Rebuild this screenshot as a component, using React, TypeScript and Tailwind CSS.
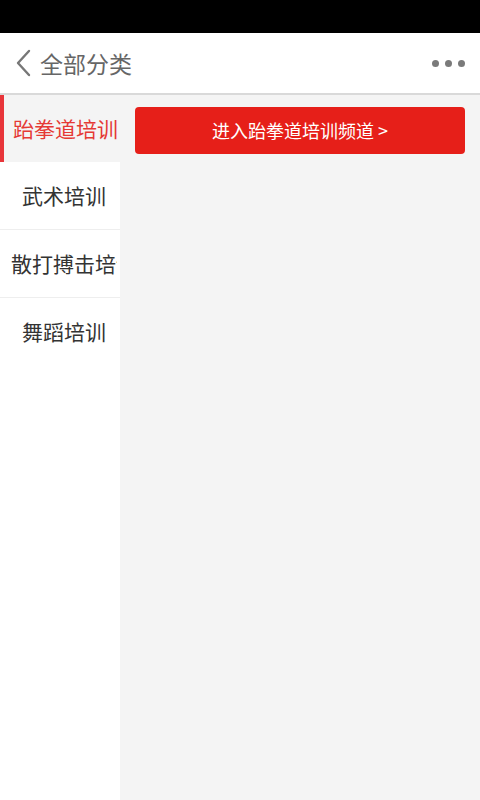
import { useState } from "react";

const categories = ["跆拳道培训", "武术培训", "散打搏击培训", "舞蹈培训"];

export default function App() {
  const [active, setActive] = useState(0);

  return (
    <div
      className="w-[480px] h-[800px] flex flex-col overflow-hidden bg-[#f4f4f4]"
      style={{ fontFamily: '"Noto Sans CJK SC", "Liberation Sans", sans-serif' }}
    >
      <div className="h-[33px] bg-black shrink-0" />

      <div className="h-[62px] bg-white flex items-center justify-between pl-[14px] pr-[14px] border-b-2 border-[#d9d9d9] shrink-0">
        <div className="flex items-center gap-[6px]">
          <svg width="20" height="28" viewBox="0 0 20 28" fill="none">
            <path d="M15 2 L4 14 L15 26" stroke="#777" strokeWidth="2.4" strokeLinecap="round" strokeLinejoin="round" />
          </svg>
          <span className="text-[23px] text-[#666] leading-none">全部分类</span>
        </div>
        <div className="flex items-center gap-[6px] pr-[1px]">
          <span className="w-[7px] h-[7px] rounded-full bg-[#7a7a7a]" />
          <span className="w-[7px] h-[7px] rounded-full bg-[#7a7a7a]" />
          <span className="w-[7px] h-[7px] rounded-full bg-[#7a7a7a]" />
        </div>
      </div>

      <div className="flex flex-1 min-h-0">
        <div className="w-[120px] bg-white shrink-0 flex flex-col">
          {categories.map((c, i) => {
            const last = i === categories.length - 1;
            return (
              <button
                key={c}
                onClick={() => setActive(i)}
                className={
                  i === active
                    ? "h-[67px] shrink-0 flex items-center justify-center pl-[8px] overflow-hidden whitespace-nowrap bg-[#f4f4f4] border-l-4 border-[#e8353a] text-[#e53935] text-[21px]"
                    : last
                    ? "h-[68px] shrink-0 flex items-center justify-center pl-[8px] overflow-hidden whitespace-nowrap bg-white text-[#333] text-[21px]"
                    : "h-[68px] shrink-0 flex items-center justify-center pl-[8px] overflow-hidden whitespace-nowrap bg-white border-b border-[#eeeeee] text-[#333] text-[21px]"
                }
              >
                <span className="block w-[106px] overflow-hidden" style={{ textAlign: c.length > 4 ? "left" : "center" }}>
                  {c}
                </span>
              </button>
            );
          })}
        </div>

        <div className="flex-1 pt-[12px] pl-[15px] pr-[15px]">
          <button className="w-full h-[47px] rounded-[4px] bg-[#e61f19] text-white text-[18px] flex items-center justify-center">
            进入跆拳道培训频道 &gt;
          </button>
        </div>
      </div>
    </div>
  );
}
